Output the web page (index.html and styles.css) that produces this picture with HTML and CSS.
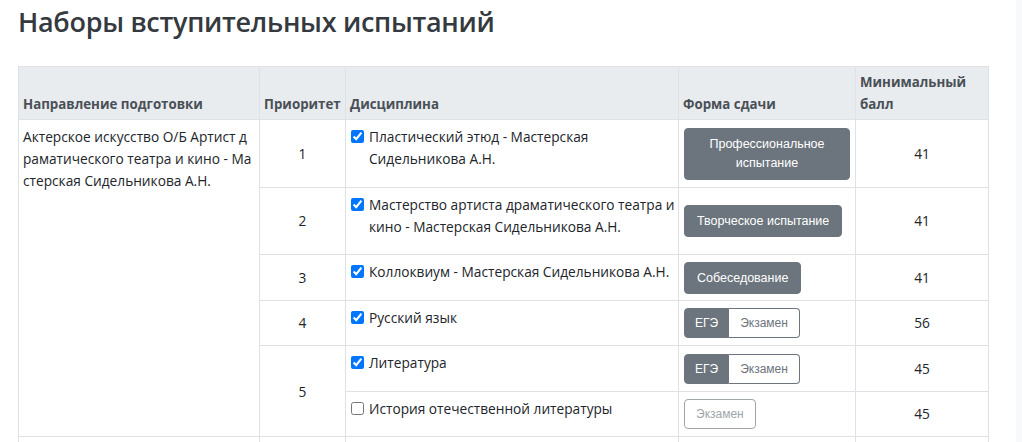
FILE: index.html
```html
<!DOCTYPE html>
<html lang="ru">
<head>
<meta charset="utf-8">
<title>Наборы вступительных испытаний</title>
<link rel="stylesheet" href="styles.css">
</head>
<body>
<div class="page">
  <main class="main">
    <h1 class="title">Наборы вступительных испытаний</h1>
    <table class="exams">
      <colgroup>
        <col class="col-dir">
        <col class="col-prio">
        <col class="col-disc">
        <col class="col-form">
        <col class="col-min">
      </colgroup>
      <thead>
        <tr>
          <th>Направление подготовки</th>
          <th>Приоритет</th>
          <th>Дисциплина</th>
          <th>Форма сдачи</th>
          <th>Минимальный балл</th>
        </tr>
      </thead>
      <tbody>
        <tr class="row-first">
          <td class="dir" rowspan="6">Актерское искусство О/Б Артист драматического театра и кино - Мастерская Сидельникова А.Н.</td>
          <td class="num">1</td>
          <td class="disc"><label class="check"><input type="checkbox" checked><span>Пластический этюд - Мастерская Сидельникова А.Н.</span></label></td>
          <td class="form"><span class="btn btn-dark btn-wrap">Профессиональное испытание</span></td>
          <td class="num">41</td>
        </tr>
        <tr>
          <td class="num">2</td>
          <td class="disc"><label class="check"><input type="checkbox" checked><span>Мастерство артиста драматического театра и кино - Мастерская Сидельникова А.Н.</span></label></td>
          <td class="form"><span class="btn btn-dark">Творческое испытание</span></td>
          <td class="num">41</td>
        </tr>
        <tr>
          <td class="num">3</td>
          <td class="disc"><label class="check"><input type="checkbox" checked><span>Коллоквиум - Мастерская Сидельникова А.Н.</span></label></td>
          <td class="form"><span class="btn btn-dark">Собеседование</span></td>
          <td class="num">41</td>
        </tr>
        <tr>
          <td class="num">4</td>
          <td class="disc"><label class="check"><input type="checkbox" checked><span>Русский язык</span></label></td>
          <td class="form"><span class="group"><span class="gbtn gbtn-on">ЕГЭ</span><span class="gbtn gbtn-off">Экзамен</span></span></td>
          <td class="num">56</td>
        </tr>
        <tr>
          <td class="num" rowspan="2">5</td>
          <td class="disc"><label class="check"><input type="checkbox" checked><span>Литература</span></label></td>
          <td class="form"><span class="group"><span class="gbtn gbtn-on">ЕГЭ</span><span class="gbtn gbtn-off">Экзамен</span></span></td>
          <td class="num">45</td>
        </tr>
        <tr>
          <td class="disc"><label class="check"><input type="checkbox"><span>История отечественной литературы</span></label></td>
          <td class="form"><span class="gbtn gbtn-disabled">Экзамен</span></td>
          <td class="num">45</td>
        </tr>
        <tr class="row-next">
          <td></td>
          <td></td>
          <td></td>
          <td></td>
          <td></td>
        </tr>
      </tbody>
    </table>
  </main>
  <aside class="side"></aside>
</div>
</body>
</html>
```

FILE: styles.css
```css
html, body {
  margin: 0;
  padding: 0;
  background: #ffffff;
  overflow: hidden;
}

body {
  font-family: "Open Sans", "Noto Sans", sans-serif;
  font-size: 13.7px;
  line-height: 22px;
  color: #212529;
}

.page {
  display: flex;
  height: 442px;
}

.main {
  flex: 1;
  padding: 3px 0 0 18px;
  min-width: 0;
}

.side {
  width: 6px;
  background: #f8f9fa;
}

.title {
  margin: 0 0 25px 0;
  font-size: 27px;
  font-weight: 600;
  letter-spacing: -0.3px;
  line-height: 38px;
  color: #343a40;
}

.exams {
  border-collapse: collapse;
  table-layout: fixed;
  width: 970px;
}

.col-dir { width: 241px; }
.col-prio { width: 86px; }
.col-disc { width: 333px; }
.col-form { width: 177px; }
.col-min { width: 133px; }

.exams th,
.exams td {
  border: 1px solid #dee2e6;
  padding: 6px 5px 5px 5px;
}

.exams th {
  background: #e9ecef;
  color: #495057;
  font-size: 13.3px;
  font-weight: 700;
  text-align: left;
  vertical-align: bottom;
  padding: 4px 5px 4px 4px;
}

.dir {
  vertical-align: top;
  word-break: break-all;
}

.exams td.dir {
  padding-left: 4px;
  padding-right: 6px;
}

.num {
  text-align: center;
  vertical-align: middle;
}

.disc {
  vertical-align: top;
}

.exams td.disc {
  padding-right: 1px;
}

.form {
  vertical-align: middle;
}

.check {
  display: flex;
  align-items: flex-start;
  gap: 5px;
  margin-bottom: 11.5px;
}

.check input {
  margin: 4px 0 0 0;
  width: 13px;
  height: 13px;
  flex: none;
}

.btn {
  display: inline-block;
  font-family: "Liberation Sans", Arial, sans-serif;
  font-size: 12.5px;
  line-height: 18px;
  padding: 6px 12px;
  border: 1px solid #6c757d;
  border-radius: 4px;
  text-align: center;
}

.btn-dark {
  background: #6c757d;
  color: #ffffff;
}

.btn-wrap {
  display: block;
  padding: 6px 12px;
  line-height: 19px;
}

.group {
  display: inline-flex;
}

.gbtn {
  display: inline-block;
  font-family: "Liberation Sans", Arial, sans-serif;
  font-size: 12px;
  line-height: 18px;
  padding: 5px 11px;
  border: 1px solid #6c757d;
  color: #6c757d;
  background: #ffffff;
  border-radius: 4px;
}

.group .gbtn-on {
  background: #6c757d;
  color: #ffffff;
  border-radius: 4px 0 0 4px;
  padding: 5px 10px;
}

.group .gbtn-off {
  border-radius: 0 4px 4px 0;
  border-left: none;
}

.gbtn-disabled {
  opacity: 0.65;
}

.row-next td {
  height: 40px;
}
```
